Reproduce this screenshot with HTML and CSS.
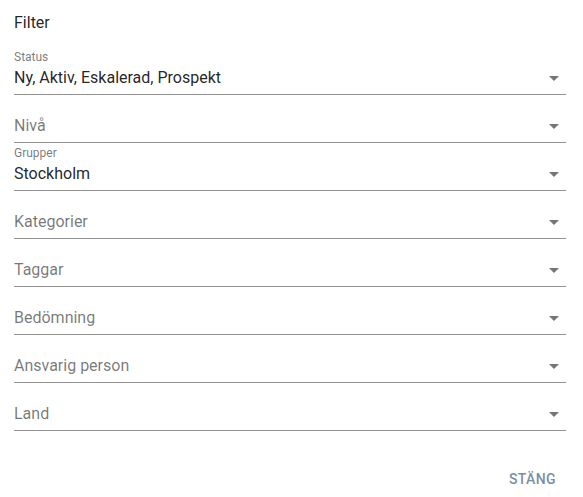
FILE: index.html
```html
<!DOCTYPE html>
<html lang="sv">
<head>
<meta charset="utf-8">
<title>Filter</title>
<link rel="stylesheet" href="styles.css">
</head>
<body>
<div class="dialog">
  <h2 class="title">Filter</h2>
  <div class="fields">
    <div class="field filled">
      <div class="text"><div class="label">Status</div><div class="value">Ny, Aktiv, Eskalerad, Prospekt</div></div>
      <svg class="arrow" viewBox="0 0 24 24" width="24" height="24"><path d="M7 10l5 5 5-5z"/></svg>
    </div>
    <div class="field">
      <div class="text"><div class="placeholder">Nivå</div></div>
      <svg class="arrow" viewBox="0 0 24 24" width="24" height="24"><path d="M7 10l5 5 5-5z"/></svg>
    </div>
    <div class="field filled">
      <div class="text"><div class="label">Grupper</div><div class="value">Stockholm</div></div>
      <svg class="arrow" viewBox="0 0 24 24" width="24" height="24"><path d="M7 10l5 5 5-5z"/></svg>
    </div>
    <div class="field">
      <div class="text"><div class="placeholder">Kategorier</div></div>
      <svg class="arrow" viewBox="0 0 24 24" width="24" height="24"><path d="M7 10l5 5 5-5z"/></svg>
    </div>
    <div class="field">
      <div class="text"><div class="placeholder">Taggar</div></div>
      <svg class="arrow" viewBox="0 0 24 24" width="24" height="24"><path d="M7 10l5 5 5-5z"/></svg>
    </div>
    <div class="field">
      <div class="text"><div class="placeholder">Bedömning</div></div>
      <svg class="arrow" viewBox="0 0 24 24" width="24" height="24"><path d="M7 10l5 5 5-5z"/></svg>
    </div>
    <div class="field">
      <div class="text"><div class="placeholder">Ansvarig person</div></div>
      <svg class="arrow" viewBox="0 0 24 24" width="24" height="24"><path d="M7 10l5 5 5-5z"/></svg>
    </div>
    <div class="field">
      <div class="text"><div class="placeholder">Land</div></div>
      <svg class="arrow" viewBox="0 0 24 24" width="24" height="24"><path d="M7 10l5 5 5-5z"/></svg>
    </div>
  </div>
  <div class="actions">
    <button class="btn" type="button">Stäng</button>
  </div>
</div>
</body>
</html>
```
FILE: styles.css
```css
html, body {
  margin: 0;
  padding: 0;
  background: #ffffff;
}
body {
  font-family: Roboto, "Liberation Sans", Arial, sans-serif;
  color: rgba(0, 0, 0, 0.87);
}
.dialog {
  width: 552px;
  padding: 11px 17px 0 14px;
}
.title {
  margin: 0;
  font-size: 16px;
  font-weight: 400;
  line-height: 24px;
  color: rgba(0, 0, 0, 0.87);
}
.fields {
  margin-top: 12px;
  display: flex;
  flex-direction: column;
}
.field {
  height: 48px;
  box-sizing: border-box;
  border-bottom: 1px solid rgba(0, 0, 0, 0.42);
  display: flex;
  align-items: flex-start;
}
.text {
  flex: 1;
  min-width: 0;
}
.label {
  font-size: 12px;
  line-height: 16px;
  padding-top: 2px;
  height: 18px;
  box-sizing: border-box;
  color: rgba(0, 0, 0, 0.54);
}
.value {
  font-size: 16px;
  line-height: 19px;
  margin-top: 3px;
  color: rgba(0, 0, 0, 0.87);
}
.placeholder {
  font-size: 16px;
  line-height: 16px;
  padding-top: 23px;
  color: rgba(0, 0, 0, 0.54);
}
.arrow {
  flex: none;
  margin-top: 19px;
  fill: rgba(0, 0, 0, 0.54);
}
.actions {
  display: flex;
  justify-content: flex-end;
  margin-top: 36px;
  padding-right: 10px;
}
.btn {
  border: 0;
  background: transparent;
  padding: 0;
  font-family: Roboto, "Liberation Sans", Arial, sans-serif;
  font-size: 14px;
  font-weight: 500;
  line-height: 24px;
  letter-spacing: 0.02857em;
  text-transform: uppercase;
  color: #7a8ea5;
}
```
